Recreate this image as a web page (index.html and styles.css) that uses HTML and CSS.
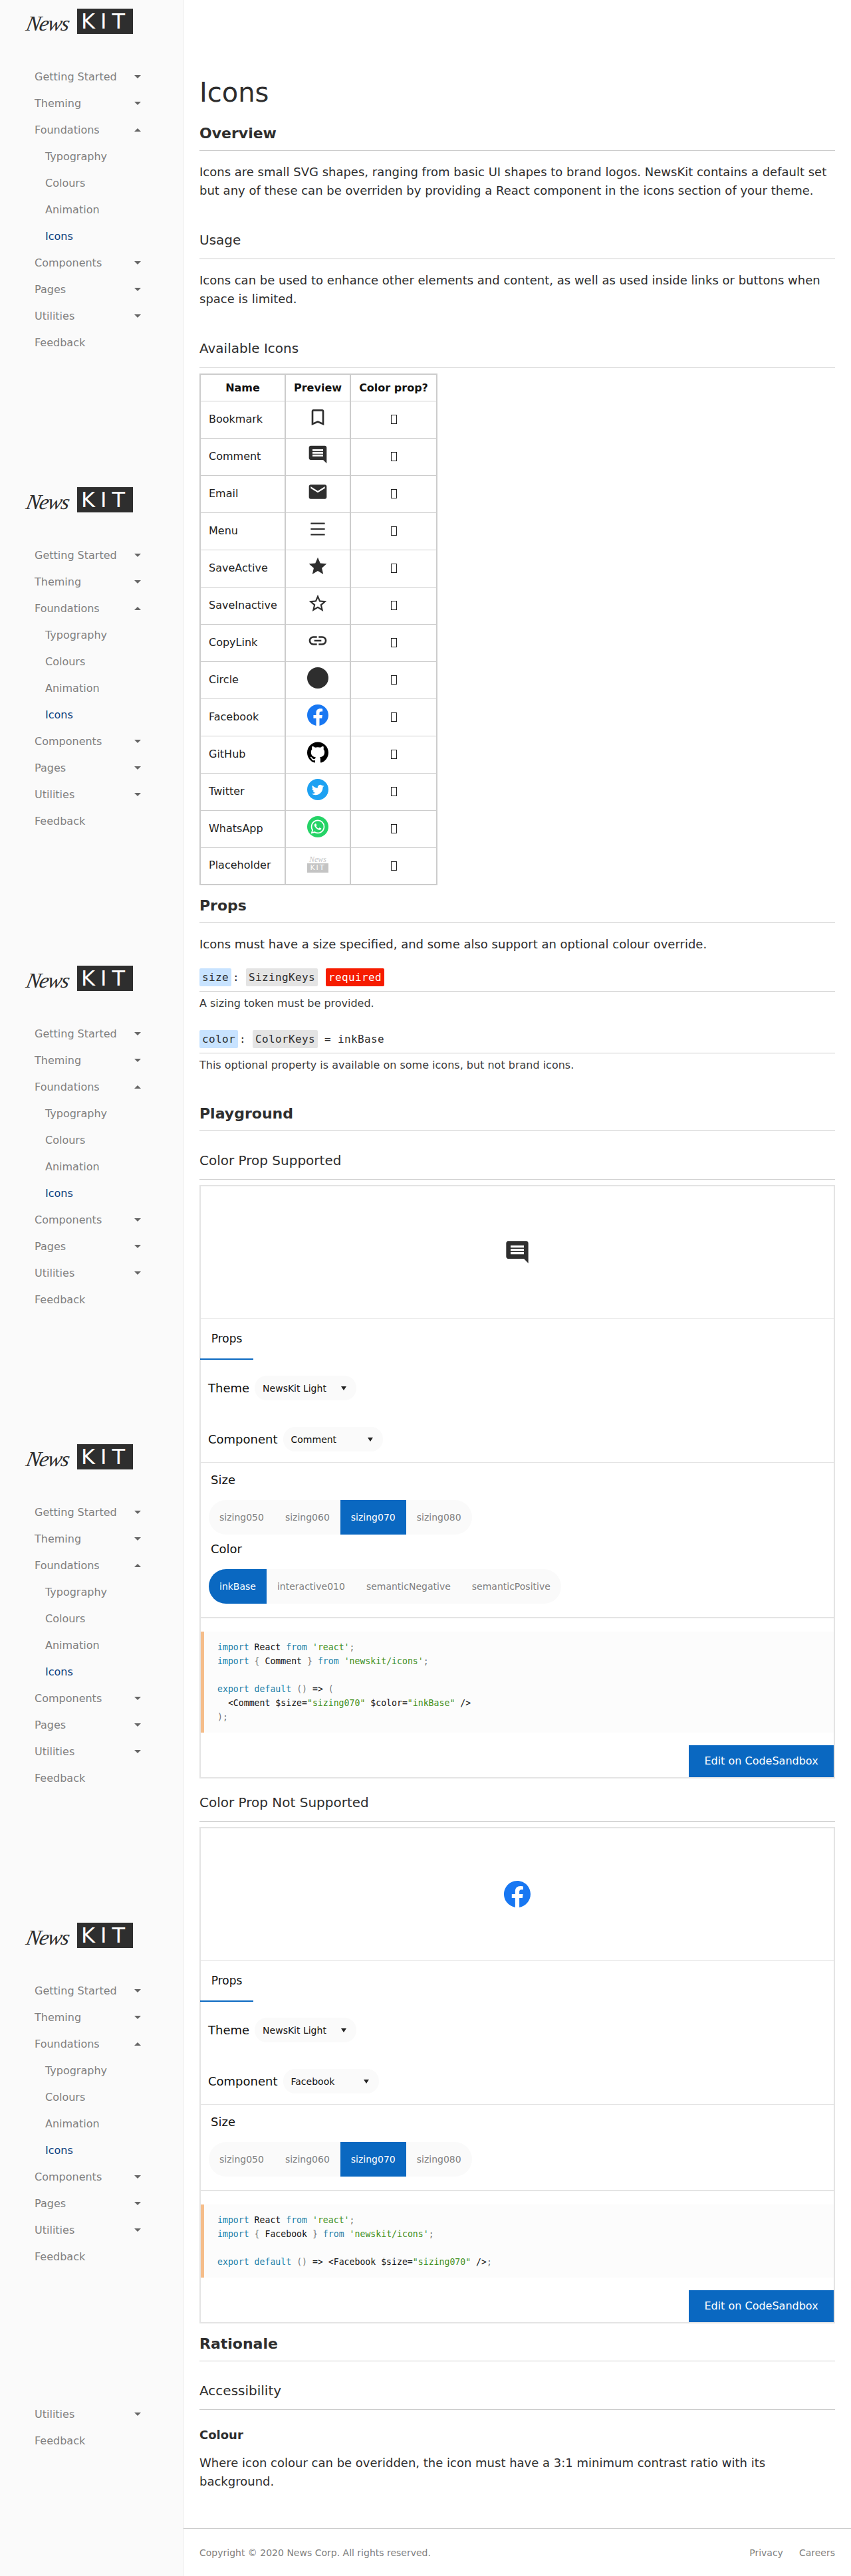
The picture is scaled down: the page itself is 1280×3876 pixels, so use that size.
FILE: index.html
```html
<!DOCTYPE html>
<html lang="en">
<head>
  <meta charset="UTF-8" />
  <title>Icons</title>
  <link rel="stylesheet" href="styles.css">
</head>
<body>
  <div class="page">
    <aside class="sidebar">
      <div class="tile">
        <div class="logo"><span class="logo-news">News</span><span class="logo-kit">KIT</span></div>
        <nav class="nav">
          <a class="nav-item">Getting Started<i class="arrow"></i></a>
          <a class="nav-item">Theming<i class="arrow"></i></a>
          <a class="nav-item">Foundations<i class="arrow up"></i></a>
          <a class="nav-item sub">Typography</a>
          <a class="nav-item sub">Colours</a>
          <a class="nav-item sub">Animation</a>
          <a class="nav-item sub active">Icons</a>
          <a class="nav-item">Components<i class="arrow"></i></a>
          <a class="nav-item">Pages<i class="arrow"></i></a>
          <a class="nav-item">Utilities<i class="arrow"></i></a>
          <a class="nav-item">Feedback</a>
        </nav>
      </div>
      <div class="tile">
        <div class="logo"><span class="logo-news">News</span><span class="logo-kit">KIT</span></div>
        <nav class="nav">
          <a class="nav-item">Getting Started<i class="arrow"></i></a>
          <a class="nav-item">Theming<i class="arrow"></i></a>
          <a class="nav-item">Foundations<i class="arrow up"></i></a>
          <a class="nav-item sub">Typography</a>
          <a class="nav-item sub">Colours</a>
          <a class="nav-item sub">Animation</a>
          <a class="nav-item sub active">Icons</a>
          <a class="nav-item">Components<i class="arrow"></i></a>
          <a class="nav-item">Pages<i class="arrow"></i></a>
          <a class="nav-item">Utilities<i class="arrow"></i></a>
          <a class="nav-item">Feedback</a>
        </nav>
      </div>
      <div class="tile">
        <div class="logo"><span class="logo-news">News</span><span class="logo-kit">KIT</span></div>
        <nav class="nav">
          <a class="nav-item">Getting Started<i class="arrow"></i></a>
          <a class="nav-item">Theming<i class="arrow"></i></a>
          <a class="nav-item">Foundations<i class="arrow up"></i></a>
          <a class="nav-item sub">Typography</a>
          <a class="nav-item sub">Colours</a>
          <a class="nav-item sub">Animation</a>
          <a class="nav-item sub active">Icons</a>
          <a class="nav-item">Components<i class="arrow"></i></a>
          <a class="nav-item">Pages<i class="arrow"></i></a>
          <a class="nav-item">Utilities<i class="arrow"></i></a>
          <a class="nav-item">Feedback</a>
        </nav>
      </div>
      <div class="tile">
        <div class="logo"><span class="logo-news">News</span><span class="logo-kit">KIT</span></div>
        <nav class="nav">
          <a class="nav-item">Getting Started<i class="arrow"></i></a>
          <a class="nav-item">Theming<i class="arrow"></i></a>
          <a class="nav-item">Foundations<i class="arrow up"></i></a>
          <a class="nav-item sub">Typography</a>
          <a class="nav-item sub">Colours</a>
          <a class="nav-item sub">Animation</a>
          <a class="nav-item sub active">Icons</a>
          <a class="nav-item">Components<i class="arrow"></i></a>
          <a class="nav-item">Pages<i class="arrow"></i></a>
          <a class="nav-item">Utilities<i class="arrow"></i></a>
          <a class="nav-item">Feedback</a>
        </nav>
      </div>
      <div class="tile">
        <div class="logo"><span class="logo-news">News</span><span class="logo-kit">KIT</span></div>
        <nav class="nav">
          <a class="nav-item">Getting Started<i class="arrow"></i></a>
          <a class="nav-item">Theming<i class="arrow"></i></a>
          <a class="nav-item">Foundations<i class="arrow up"></i></a>
          <a class="nav-item sub">Typography</a>
          <a class="nav-item sub">Colours</a>
          <a class="nav-item sub">Animation</a>
          <a class="nav-item sub active">Icons</a>
          <a class="nav-item">Components<i class="arrow"></i></a>
          <a class="nav-item">Pages<i class="arrow"></i></a>
          <a class="nav-item">Utilities<i class="arrow"></i></a>
          <a class="nav-item">Feedback</a>
        </nav>
      </div>
      <div class="tile tile-end">
        <nav class="nav">
          <a class="nav-item">Utilities<i class="arrow"></i></a>
          <a class="nav-item">Feedback</a>
        </nav>
      </div>
    </aside>

    <div class="main">
      <main class="content">
        <h1>Icons</h1>
        <h2 class="title-first">Overview</h2>
        <p class="text">Icons are small SVG shapes, ranging from basic UI shapes to brand logos. NewsKit contains a default set but any of these can be overriden by providing a React component in the icons section of your theme.</p>
        <h3>Usage</h3>
        <p class="text">Icons can be used to enhance other elements and content, as well as used inside links or buttons when space is limited.</p>
        <h3>Available Icons</h3>

        <table class="icons">
          <thead>
            <tr><th class="col-name">Name</th><th class="col-preview">Preview</th><th class="col-color">Color prop?</th></tr>
          </thead>
          <tbody>
            <tr><td>Bookmark</td><td class="cell-icon"><svg class="icon" viewBox="0 0 24 24"><path d="M17 3H7c-1.1 0-1.99.9-1.99 2L5 21l7-3 7 3V5c0-1.1-.9-2-2-2zm0 15l-5-2.18L7 18V5h10v13z"/></svg></td><td class="cell-tick"><i class="tick"></i></td></tr>
            <tr><td>Comment</td><td class="cell-icon"><svg class="icon" viewBox="0 0 24 24"><path d="M21.99 4c0-1.1-.89-2-1.99-2H4c-1.1 0-2 .9-2 2v12c0 1.1.9 2 2 2h14l4 4-.01-18zM18 14H6v-2h12v2zm0-3H6V9h12v2zm0-3H6V6h12v2z"/></svg></td><td class="cell-tick"><i class="tick"></i></td></tr>
            <tr><td>Email</td><td class="cell-icon"><svg class="icon" viewBox="0 0 24 24"><path d="M20 4H4c-1.1 0-1.99.9-1.99 2L2 18c0 1.1.9 2 2 2h16c1.1 0 2-.9 2-2V6c0-1.1-.9-2-2-2zm0 4l-8 5-8-5V6l8 5 8-5v2z"/></svg></td><td class="cell-tick"><i class="tick"></i></td></tr>
            <tr><td>Menu</td><td class="cell-icon"><svg class="icon" viewBox="0 0 24 24"><rect x="4" y="4.9" width="16" height="1.6" rx=".4"/><rect x="4" y="11.2" width="16" height="1.6" rx=".4"/><rect x="4" y="17.5" width="16" height="1.6" rx=".4"/></svg></td><td class="cell-tick"><i class="tick"></i></td></tr>
            <tr><td>SaveActive</td><td class="cell-icon"><svg class="icon" viewBox="0 0 24 24"><path d="M12 17.27L18.18 21l-1.64-7.03L22 9.24l-7.19-.61L12 2 9.19 8.63 2 9.24l5.46 4.73L5.82 21z"/></svg></td><td class="cell-tick"><i class="tick"></i></td></tr>
            <tr><td>SaveInactive</td><td class="cell-icon"><svg class="icon" viewBox="0 0 24 24"><path d="M22 9.24l-7.19-.62L12 2 9.19 8.63 2 9.24l5.46 4.73L5.82 21 12 17.27 18.18 21l-1.63-7.03L22 9.24zM12 15.4l-3.76 2.27 1-4.28-3.32-2.88 4.38-.38L12 6.1l1.71 4.04 4.38.38-3.32 2.88 1 4.28L12 15.4z"/></svg></td><td class="cell-tick"><i class="tick"></i></td></tr>
            <tr><td>CopyLink</td><td class="cell-icon"><svg class="icon" viewBox="0 0 24 24"><path d="M3.9 12c0-1.71 1.39-3.1 3.1-3.1h4V7H7c-2.76 0-5 2.24-5 5s2.24 5 5 5h4v-1.9H7c-1.71 0-3.1-1.39-3.1-3.1zM8 13h8v-2H8v2zm9-6h-4v1.9h4c1.71 0 3.1 1.39 3.1 3.1s-1.39 3.1-3.1 3.1h-4V17h4c2.76 0 5-2.24 5-5s-2.24-5-5-5z"/></svg></td><td class="cell-tick"><i class="tick"></i></td></tr>
            <tr><td>Circle</td><td class="cell-icon"><svg class="icon" viewBox="0 0 24 24"><circle cx="12" cy="12" r="12"/></svg></td><td class="cell-tick"><i class="tick"></i></td></tr>
            <tr><td>Facebook</td><td class="cell-icon"><svg class="icon" viewBox="0 0 24 24"><circle cx="12" cy="12" r="11.5" fill="#fff"/><path fill="#1877f2" d="M24 12.073c0-6.627-5.373-12-12-12s-12 5.373-12 12c0 5.99 4.388 10.954 10.125 11.854v-8.385H7.078v-3.47h3.047V9.43c0-3.007 1.792-4.669 4.533-4.669 1.312 0 2.686.235 2.686.235v2.953H15.83c-1.491 0-1.956.925-1.956 1.874v2.25h3.328l-.532 3.47h-2.796v8.385C19.612 23.027 24 18.062 24 12.073z"/></svg></td><td class="cell-tick"><i class="tick"></i></td></tr>
            <tr><td>GitHub</td><td class="cell-icon"><svg class="icon" viewBox="0 0 24 24"><path fill="#000" d="M12 .297c-6.63 0-12 5.373-12 12 0 5.303 3.438 9.8 8.205 11.385.6.113.82-.258.82-.577 0-.285-.01-1.04-.015-2.04-3.338.724-4.042-1.61-4.042-1.61C4.422 18.07 3.633 17.7 3.633 17.7c-1.087-.744.084-.729.084-.729 1.205.084 1.838 1.236 1.838 1.236 1.07 1.835 2.809 1.305 3.495.998.108-.776.417-1.305.76-1.605-2.665-.3-5.466-1.332-5.466-5.93 0-1.31.465-2.38 1.235-3.22-.135-.303-.54-1.523.105-3.176 0 0 1.005-.322 3.3 1.23.96-.267 1.98-.399 3-.405 1.02.006 2.04.138 3 .405 2.28-1.552 3.285-1.23 3.285-1.23.645 1.653.24 2.873.12 3.176.765.84 1.23 1.91 1.23 3.22 0 4.61-2.805 5.625-5.475 5.92.42.36.81 1.096.81 2.22 0 1.606-.015 2.896-.015 3.286 0 .315.21.69.825.57C20.565 22.092 24 17.592 24 12.297c0-6.627-5.373-12-12-12"/></svg></td><td class="cell-tick"><i class="tick"></i></td></tr>
            <tr><td>Twitter</td><td class="cell-icon"><svg class="icon" viewBox="0 0 24 24"><circle cx="12" cy="12" r="12" fill="#1da1f2"/><path transform="translate(5 5.4) scale(.585)" fill="#fff" d="M23.953 4.57a10 10 0 01-2.825.775 4.958 4.958 0 002.163-2.723c-.951.555-2.005.959-3.127 1.184a4.92 4.92 0 00-8.384 4.482C7.69 8.095 4.067 6.13 1.64 3.162a4.822 4.822 0 00-.666 2.475c0 1.71.87 3.213 2.188 4.096a4.904 4.904 0 01-2.228-.616v.06a4.923 4.923 0 003.946 4.827 4.996 4.996 0 01-2.212.085 4.936 4.936 0 004.604 3.417 9.867 9.867 0 01-6.102 2.105c-.39 0-.779-.023-1.17-.067a13.995 13.995 0 007.557 2.209c9.053 0 13.998-7.496 13.998-13.985 0-.21 0-.42-.015-.63A9.935 9.935 0 0024 4.59z"/></svg></td><td class="cell-tick"><i class="tick"></i></td></tr>
            <tr><td>WhatsApp</td><td class="cell-icon"><svg class="icon" viewBox="0 0 24 24"><circle cx="12" cy="12" r="12" fill="#25d366"/><path transform="translate(4.2 4.2) scale(.65)" fill="#fff" d="M17.472 14.382c-.297-.149-1.758-.867-2.03-.967-.273-.099-.471-.148-.67.15-.197.297-.767.966-.94 1.164-.173.199-.347.223-.644.075-.297-.15-1.255-.463-2.39-1.475-.883-.788-1.48-1.761-1.653-2.059-.173-.297-.018-.458.13-.606.134-.133.298-.347.446-.52.149-.174.198-.298.298-.497.099-.198.05-.371-.025-.52-.075-.149-.669-1.612-.916-2.207-.242-.579-.487-.5-.669-.51-.173-.008-.371-.01-.57-.01-.198 0-.52.074-.792.372-.272.297-1.04 1.016-1.04 2.479 0 1.462 1.065 2.875 1.213 3.074.149.198 2.096 3.2 5.077 4.487.709.306 1.262.489 1.694.625.712.227 1.36.195 1.871.118.571-.085 1.758-.719 2.006-1.413.248-.694.248-1.289.173-1.413-.074-.124-.272-.198-.57-.347m-5.421 7.403h-.004a9.87 9.87 0 01-5.031-1.378l-.361-.214-3.741.982.998-3.648-.235-.374a9.86 9.86 0 01-1.51-5.26c.001-5.45 4.436-9.884 9.888-9.884 2.64 0 5.122 1.03 6.988 2.898a9.825 9.825 0 012.893 6.994c-.003 5.45-4.437 9.884-9.885 9.884m8.413-18.297A11.815 11.815 0 0012.05 0C5.495 0 .16 5.335.157 11.892c0 2.096.547 4.142 1.588 5.945L.057 24l6.305-1.654a11.882 11.882 0 005.683 1.448h.005c6.554 0 11.89-5.335 11.893-11.893a11.821 11.821 0 00-3.48-8.413z"/></svg></td><td class="cell-tick"><i class="tick"></i></td></tr>
            <tr><td>Placeholder</td><td class="cell-icon"><div class="placeholder"><span class="placeholder-news">News</span><span class="placeholder-kit">KIT</span></div></td><td class="cell-tick"><i class="tick"></i></td></tr>
          </tbody>
        </table>

        <h2 class="title-props">Props</h2>
        <p class="text">Icons must have a size specified, and some also support an optional colour override.</p>

        <div class="prop">
          <div class="prop-sig"><code class="tag tag-name">size</code><span class="colon">:</span><code class="tag tag-type">SizingKeys</code><code class="tag tag-req">required</code></div>
          <p class="prop-text">A sizing token must be provided.</p>
        </div>
        <div class="prop">
          <div class="prop-sig"><code class="tag tag-name">color</code><span class="colon">:</span><code class="tag tag-type">ColorKeys</code><code class="default">= inkBase</code></div>
          <p class="prop-text">This optional property is available on some icons, but not brand icons.</p>
        </div>

        <h2 class="title-play">Playground</h2>
        <h3 class="title-sub">Color Prop Supported</h3>

        <section class="playground">
          <div class="preview"><svg class="icon" viewBox="0 0 24 24"><path d="M21.99 4c0-1.1-.89-2-1.99-2H4c-1.1 0-2 .9-2 2v12c0 1.1.9 2 2 2h14l4 4-.01-18zM18 14H6v-2h12v2zm0-3H6V9h12v2zm0-3H6V6h12v2z"/></svg></div>
          <div class="tabs"><span class="tab">Props</span></div>
          <div class="pick-row"><span class="pick-label">Theme</span><span class="select select-theme">NewsKit Light<i class="caret"></i></span></div>
          <div class="pick-row pick-last"><span class="pick-label">Component</span><span class="select select-comment">Comment<i class="caret"></i></span></div>
          <div class="controls">
            <div class="control-label">Size</div>
            <div class="pills">
              <span class="pill">sizing050</span><span class="pill">sizing060</span><span class="pill on">sizing070</span><span class="pill">sizing080</span>
            </div>
            <div class="control-label">Color</div>
            <div class="pills">
              <span class="pill on">inkBase</span><span class="pill">interactive010</span><span class="pill">semanticNegative</span><span class="pill">semanticPositive</span>
            </div>
          </div>
          <div class="code-wrap">
<pre class="code"><span class="kw">import</span> React <span class="kw">from</span> <span class="str">'react'</span><span class="pun">;</span>
<span class="kw">import</span> <span class="pun">{</span> Comment <span class="pun">}</span> <span class="kw">from</span> <span class="str">'newskit/icons'</span><span class="pun">;</span>

<span class="kw">export</span> <span class="kw">default</span> <span class="pun">()</span> =&gt; <span class="pun">(</span>
  &lt;Comment $size=<span class="str">"sizing070"</span> $color=<span class="str">"inkBase"</span> /&gt;
<span class="pun">);</span></pre>
            <div class="sandbox-row"><a class="sandbox">Edit on CodeSandbox</a></div>
          </div>
        </section>

        <h3 class="title-second">Color Prop Not Supported</h3>

        <section class="playground">
          <div class="preview"><svg class="icon" viewBox="0 0 24 24"><circle cx="12" cy="12" r="11.5" fill="#fff"/><path fill="#1877f2" d="M24 12.073c0-6.627-5.373-12-12-12s-12 5.373-12 12c0 5.99 4.388 10.954 10.125 11.854v-8.385H7.078v-3.47h3.047V9.43c0-3.007 1.792-4.669 4.533-4.669 1.312 0 2.686.235 2.686.235v2.953H15.83c-1.491 0-1.956.925-1.956 1.874v2.25h3.328l-.532 3.47h-2.796v8.385C19.612 23.027 24 18.062 24 12.073z"/></svg></div>
          <div class="tabs"><span class="tab">Props</span></div>
          <div class="pick-row"><span class="pick-label">Theme</span><span class="select select-theme">NewsKit Light<i class="caret"></i></span></div>
          <div class="pick-row pick-last"><span class="pick-label">Component</span><span class="select select-facebook">Facebook<i class="caret"></i></span></div>
          <div class="controls">
            <div class="control-label">Size</div>
            <div class="pills">
              <span class="pill">sizing050</span><span class="pill">sizing060</span><span class="pill on">sizing070</span><span class="pill">sizing080</span>
            </div>
          </div>
          <div class="code-wrap">
<pre class="code"><span class="kw">import</span> React <span class="kw">from</span> <span class="str">'react'</span><span class="pun">;</span>
<span class="kw">import</span> <span class="pun">{</span> Facebook <span class="pun">}</span> <span class="kw">from</span> <span class="str">'newskit/icons'</span><span class="pun">;</span>

<span class="kw">export</span> <span class="kw">default</span> <span class="pun">()</span> =&gt; &lt;Facebook $size=<span class="str">"sizing070"</span> /&gt;<span class="pun">;</span></pre>
            <div class="sandbox-row"><a class="sandbox">Edit on CodeSandbox</a></div>
          </div>
        </section>

        <h2 class="title-rationale">Rationale</h2>
        <h3 class="title-sub">Accessibility</h3>
        <h4>Colour</h4>
        <p class="text">Where icon colour can be overidden, the icon must have a 3:1 minimum contrast ratio with its background.</p>
      </main>

      <footer class="footer">
        <span>Copyright © 2020 News Corp. All rights reserved.</span>
        <span class="footer-links"><a>Privacy</a><a>Careers</a></span>
      </footer>
    </div>
  </div>
</body>
</html>
```

FILE: styles.css
```css
* {
  box-sizing: border-box;
}
body {
  margin: 0;
  background: #fff;
  color: #2e2e2e;
  font-family: "DejaVu Sans", sans-serif;
  font-size: 16px;
}
.page {
  display: flex;
  height: 3876px;
  overflow: hidden;
}

/* sidebar */
.sidebar {
  width: 276px;
  flex: none;
  background: #fafafa;
  border-right: 1px solid #e8e8e8;
}
.tile {
  height: 720px;
  padding-top: 13px;
}
.tile-end {
  height: 276px;
  padding-top: 12px;
}
.logo {
  display: flex;
  align-items: center;
  height: 38px;
  margin-left: 40px;
  margin-bottom: 44px;
}
.logo-news {
  width: 76px;
  font-family: "Liberation Serif", serif;
  font-style: italic;
  font-size: 32px;
  letter-spacing: -1.5px;
  color: #2e2e2e;
  transform: translateY(3px) skewX(-12deg);
}
.logo-kit {
  width: 84px;
  height: 38px;
  padding-left: 6px;
  background: #2e2e2e;
  color: #fff;
  font-size: 32px;
  line-height: 38px;
  letter-spacing: 8px;
}
.nav-item {
  display: flex;
  align-items: center;
  justify-content: space-between;
  height: 40px;
  width: 160px;
  margin-left: 52px;
  color: #808080;
  font-size: 16px;
}
.nav-item.sub {
  margin-left: 68px;
}
.nav-item.active {
  color: #0a3f7f;
}
.arrow {
  width: 0;
  height: 0;
  border-left: 5px solid transparent;
  border-right: 5px solid transparent;
  border-top: 5px solid #666;
}
.arrow.up {
  border-top: 0;
  border-bottom: 5px solid #666;
}

/* main column */
.main {
  flex: 1;
  min-width: 0;
  display: flex;
  flex-direction: column;
}
.content {
  flex: 1;
  padding: 115px 24px 0;
}
h1 {
  margin: 0;
  font-size: 40px;
  font-weight: 400;
  line-height: 48px;
}
h2 {
  margin: 0;
  font-size: 22px;
  font-weight: 700;
  line-height: 32px;
  padding-bottom: 9px;
  border-bottom: 1px solid #ccc;
}
h3 {
  margin: 46px 0 0;
  font-size: 20px;
  font-weight: 400;
  line-height: 28px;
  padding-bottom: 14px;
  border-bottom: 1px solid #ccc;
}
h4 {
  margin: 24px 0 0;
  font-size: 18px;
  font-weight: 700;
  line-height: 28px;
}
.title-first {
  margin-top: 22px;
}
.title-sub {
  margin-top: 30px;
}
.text {
  margin: 18px 0 0;
  font-size: 18px;
  line-height: 28px;
}
h4 + .text {
  margin-top: 14px;
}

/* icon table */
.icons {
  margin-top: 9px;
  border-collapse: collapse;
  border: 2px solid #ccc;
  table-layout: fixed;
  width: 356px;
  font-size: 16px;
}
.icons th,
.icons td {
  border: 1px solid #ccc;
  border-left-width: 2px;
  border-right-width: 2px;
  padding: 0 12px;
}
.icons th {
  height: 40px;
  color: #111;
  font-size: 16px;
  font-weight: 700;
  text-align: center;
}
.icons td {
  height: 56px;
  padding-bottom: 2px;
  color: #222;
}
.col-name {
  width: 128px;
}
.col-preview {
  width: 98px;
}
.col-color {
  width: 130px;
}
.cell-icon {
  text-align: center;
}
.icons .cell-tick {
  padding-bottom: 0;
  text-align: center;
}
.tick {
  display: block;
  width: 9px;
  height: 14px;
  margin: 0 auto;
  border: 1px solid #222;
}
.icon {
  display: block;
  width: 32px;
  height: 32px;
  fill: #2e2e2e;
}
.cell-icon .icon {
  margin: -4px auto 0;
}
.placeholder {
  width: 32px;
  margin: -2px auto 0;
  color: #c4c4c4;
}
.placeholder-news {
  display: block;
  font-family: "Liberation Serif", serif;
  font-style: italic;
  font-size: 12px;
  line-height: 11px;
  text-align: center;
}
.placeholder-kit {
  display: block;
  height: 14px;
  background: #c4c4c4;
  color: #fff;
  font-size: 11px;
  line-height: 14px;
  letter-spacing: 2px;
  text-align: center;
}

/* props */
.title-props {
  margin-top: 15px;
}
.prop {
  margin-top: 22px;
}
.prop + .prop {
  margin-top: 30px;
}
.prop-sig {
  display: flex;
  align-items: center;
  height: 35px;
  padding-bottom: 7px;
  border-bottom: 1px solid #ccc;
  font-family: "DejaVu Sans Mono", monospace;
  font-size: 16px;
  letter-spacing: .37px;
}
.tag {
  height: 27px;
  padding: 0 4px;
  border-radius: 2px;
  font-family: "DejaVu Sans Mono", monospace;
  font-size: 16px;
  line-height: 27px;
}
.tag-name {
  background: #c8e3ff;
}
.tag-type {
  background: #e4e4e4;
}
.tag-req {
  margin-left: 12px;
  background: #f61c00;
  color: #fff;
}
.colon {
  width: 22px;
  padding-left: 2px;
}
.default {
  margin-left: 10px;
  font-family: "DejaVu Sans Mono", monospace;
  font-size: 16px;
}
.prop-text {
  margin: 8px 0 0;
  color: #3c3c3c;
  font-size: 16px;
  line-height: 20px;
}
.title-play {
  margin-top: 47px;
}

/* playground */
.playground {
  margin-top: 8px;
  border: 2px solid #e4e4e4;
}
.preview {
  display: flex;
  align-items: center;
  justify-content: center;
  height: 199px;
  border-bottom: 1px solid #e4e4e4;
}
.preview .icon {
  width: 40px;
  height: 40px;
}
.tabs {
  height: 62px;
}
.tab {
  display: block;
  width: 80px;
  height: 62px;
  padding-top: 18px;
  margin-left: -1px;
  border-bottom: 2px solid #0a68c1;
  color: #111;
  font-size: 17px;
  line-height: 24px;
  text-align: center;
}
.pick-row {
  display: flex;
  align-items: center;
  gap: 8px;
  height: 37px;
  margin-top: 24px;
  padding-left: 11px;
  color: #111;
  font-size: 18px;
}
.pick-last {
  margin-top: 40px;
  margin-bottom: 16px;
}
.select {
  display: flex;
  align-items: center;
  flex: none;
  height: 37px;
  padding: 0 15px 0 12px;
  border-radius: 18px;
  background: #fafafa;
  font-size: 14px;
}
.select-theme {
  width: 153px;
}
.select-comment {
  width: 150px;
}
.select-facebook {
  width: 144px;
}
.caret {
  margin-left: auto;
  width: 0;
  height: 0;
  border-left: 4px solid transparent;
  border-right: 4px solid transparent;
  border-top: 6px solid #222;
}
.controls {
  padding: 14px 12px 20px;
  border-top: 1px solid #e4e4e4;
  border-bottom: 2px solid #e4e4e4;
}
.control-label {
  padding-left: 3px;
  color: #111;
  font-size: 18px;
  line-height: 24px;
}
.pills {
  display: flex;
  width: max-content;
  margin: 18px 0 10px;
  border-radius: 26px;
  background: #fafafa;
  overflow: hidden;
}
.controls .pills:last-child {
  margin-bottom: 0;
}
.pill {
  height: 52px;
  padding: 0 16px;
  color: #808080;
  font-size: 14px;
  line-height: 52px;
}
.pill.on {
  background: #0a68c1;
  color: #fff;
}
.code-wrap {
  padding-top: 20px;
}
.code {
  margin: 0;
  padding: 13px 20px;
  border-left: 5px solid #f5bd8a;
  background: #fcfcfc;
  color: #111;
  font-family: "DejaVu Sans Mono", monospace;
  font-size: 13.2px;
  line-height: 21px;
}
.kw {
  color: #1a7fa8;
}
.str {
  color: #3f8f20;
}
.pun {
  color: #777;
}
.sandbox-row {
  display: flex;
  justify-content: flex-end;
  margin-top: 19px;
}
.sandbox {
  width: 218px;
  height: 48px;
  background: #0a68c1;
  color: #fff;
  line-height: 48px;
  text-align: center;
}
.title-second {
  margin-top: 22px;
}
.title-rationale {
  margin-top: 15px;
}

/* footer */
.footer {
  display: flex;
  align-items: center;
  justify-content: space-between;
  height: 72px;
  padding: 0 24px;
  border-top: 1px solid #ccc;
  color: #808080;
  font-size: 14px;
}
.footer-links {
  display: flex;
  gap: 24px;
}
```
